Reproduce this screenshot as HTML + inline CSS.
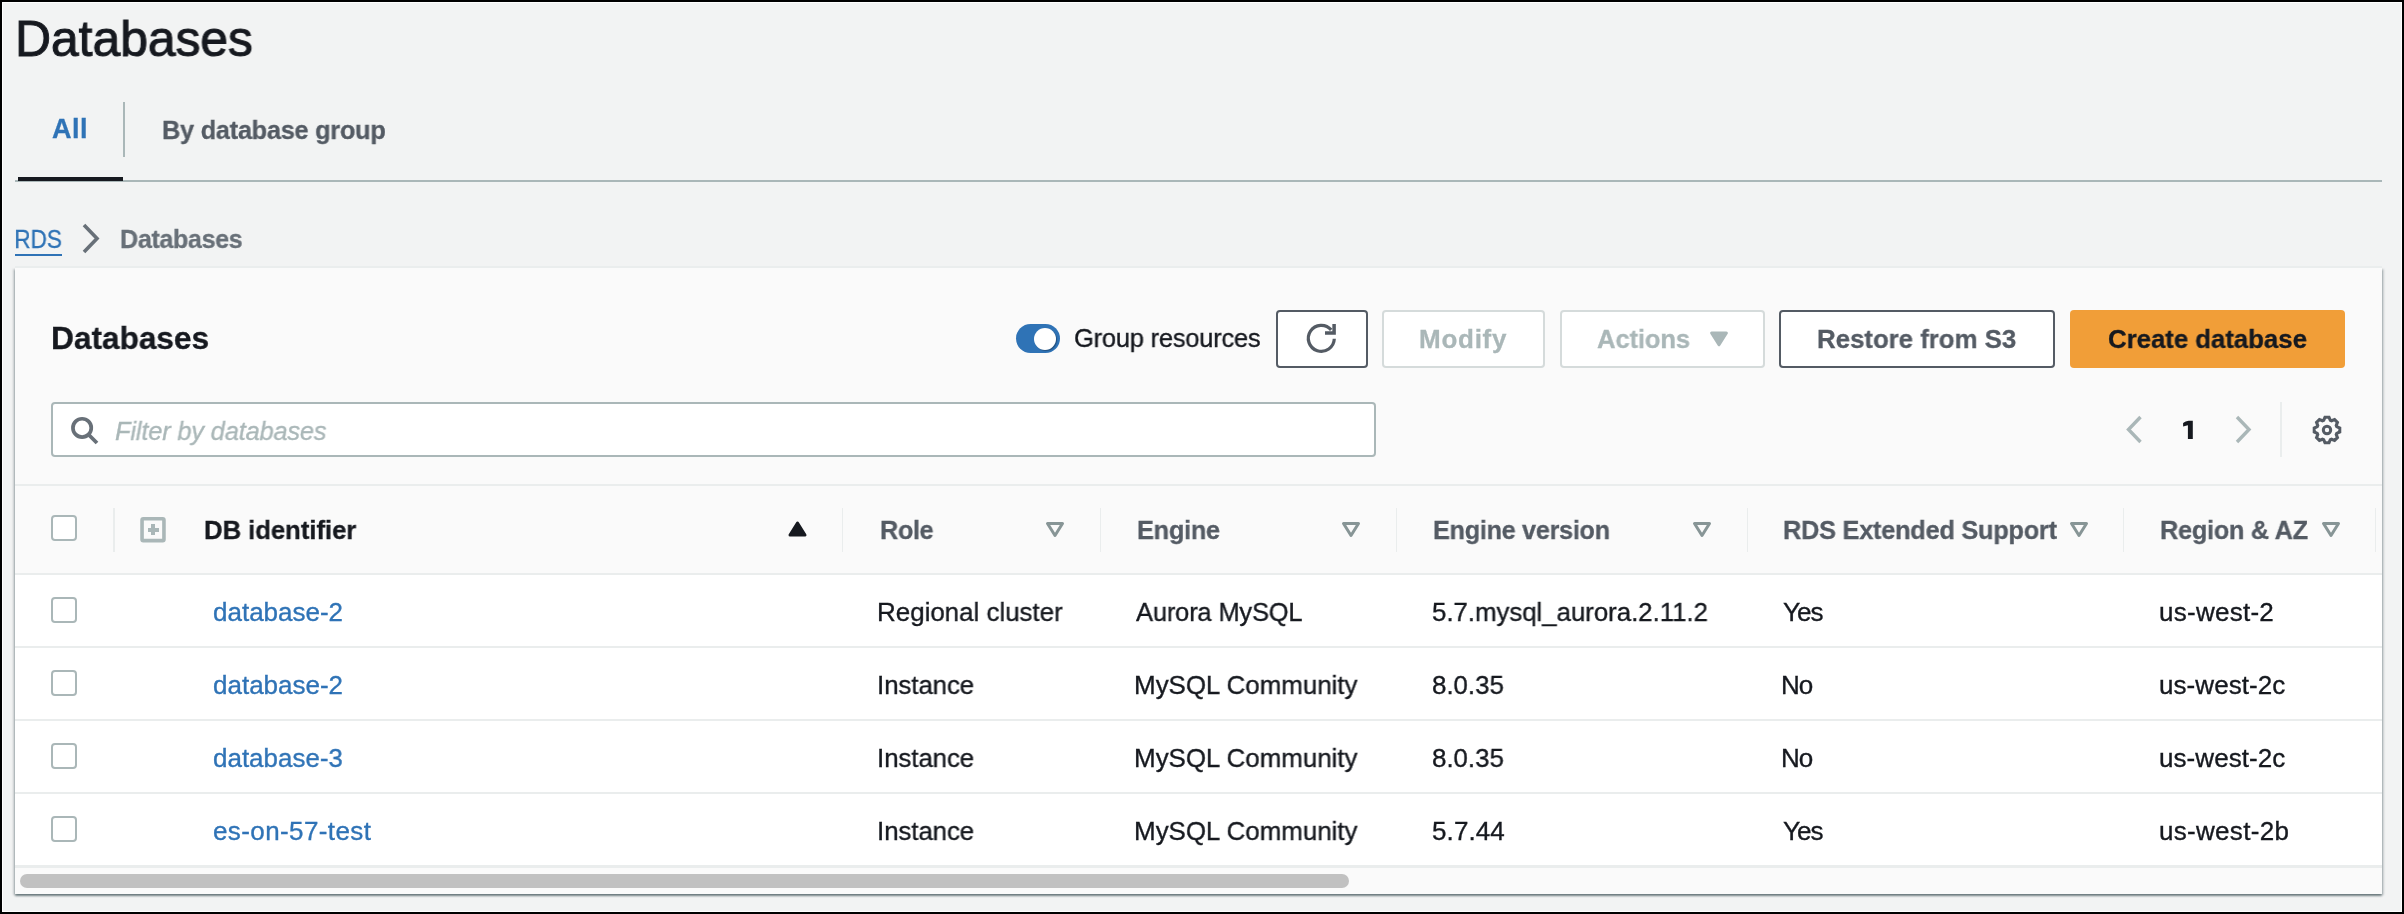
<!DOCTYPE html>
<html><head><meta charset="utf-8"><style>
html,body{margin:0;padding:0}
body{width:2404px;height:914px;overflow:hidden;background:#f2f3f3;position:relative;font-family:"Liberation Sans",sans-serif}
.t{position:absolute;white-space:nowrap;will-change:transform}
.b{position:absolute;box-sizing:border-box}
.frame{position:absolute;left:0;top:0;width:2404px;height:914px;box-sizing:border-box;border:2px solid #000;box-shadow:inset 0 0 0 1px #fff;pointer-events:none}
</style></head><body>
<div class="t" style="left:14.60px;top:14.38px;font-size:50px;line-height:50px;font-weight:normal;font-style:normal;color:#16191f;letter-spacing:-0.057px;-webkit-text-stroke:1.0px #16191f;transform:scaleX(0.9971);transform-origin:4.10px 0">Databases</div>
<div class="t" style="left:52.33px;top:116.14px;font-size:27px;line-height:27px;font-weight:bold;font-style:normal;color:#2f73b6;letter-spacing:0.541px;-webkit-text-stroke:0.3px #2f73b6">All</div>
<div class="t" style="left:162.16px;top:117.19px;font-size:26px;line-height:26px;font-weight:bold;font-style:normal;color:#545b64;letter-spacing:-0.263px;-webkit-text-stroke:0.3px #545b64;transform:scaleX(0.9734);transform-origin:1.74px 0">By database group</div>
<div class="b" style="left:123px;top:102px;width:2px;height:55px;background:#aab7b8"></div>
<div class="b" style="left:15px;top:180px;width:2367px;height:2px;background:#aab7b8"></div>
<div class="b" style="left:18px;top:177px;width:105px;height:4px;background:#16191f"></div>
<div class="t" style="left:14.07px;top:225.99px;font-size:26px;line-height:26px;font-weight:normal;font-style:normal;color:#2f73b6;letter-spacing:0.000px;-webkit-text-stroke:0.35px #2f73b6;transform:scaleX(0.8687);transform-origin:2.13px 0">RDS</div>
<div class="b" style="left:15px;top:254px;width:47px;height:2px;background:#2f73b6"></div>
<svg class="b" style="left:80px;top:222px" width="24" height="34" viewBox="0 0 24 34"><path d="M4 3 L17 16.5 L4 30" fill="none" stroke="#687078" stroke-width="3.6"/></svg>
<div class="t" style="left:120.26px;top:225.99px;font-size:26px;line-height:26px;font-weight:bold;font-style:normal;color:#687078;letter-spacing:-0.376px;-webkit-text-stroke:0.3px #687078;transform:scaleX(0.9657);transform-origin:1.74px 0">Databases</div>
<div class="b" style="left:15px;top:268px;width:2367px;height:626px;background:#fafafa;box-shadow:0 2px 2px 0 rgba(0,28,36,.45),2px 1px 2px 0 rgba(0,28,36,.15),-2px 1px 2px 0 rgba(0,28,36,.15)"></div>
<div class="b" style="left:15px;top:266px;width:2367px;height:2px;background:#eaeded"></div>
<div class="t" style="left:51.16px;top:321.61px;font-size:32px;line-height:32px;font-weight:bold;font-style:normal;color:#16191f;letter-spacing:-0.098px;-webkit-text-stroke:0.3px #16191f;transform:scaleX(0.9926);transform-origin:2.14px 0">Databases</div>
<div class="b" style="left:1016px;top:324px;width:44px;height:29px;background:#2f73b6;border-radius:15px"></div>
<div class="b" style="left:1034px;top:327.7px;width:22px;height:22px;border-radius:50%;background:#fff;box-shadow:1px 1px 1px rgba(0,0,0,.3)"></div>
<div class="t" style="left:1074.29px;top:325.39px;font-size:26px;line-height:26px;font-weight:normal;font-style:normal;color:#16191f;letter-spacing:-0.204px;-webkit-text-stroke:0.35px #16191f;transform:scaleX(0.9781);transform-origin:1.31px 0">Group resources</div>
<div class="b" style="left:1276px;top:310px;width:91.5px;height:57.5px;background:#fff;border:2px solid #545b64;border-radius:4px;box-sizing:border-box"></div>
<svg class="b" style="left:1300px;top:318px" width="44" height="42" viewBox="0 0 44 42"><path d="M34.3 20.8 A13 13 0 1 1 31.2 11.9" fill="none" stroke="#545b64" stroke-width="3.2"/><path d="M25 15.05 H34.1 V6" fill="none" stroke="#545b64" stroke-width="3.5" stroke-linejoin="miter"/></svg>
<div class="b" style="left:1382px;top:310px;width:163px;height:57.5px;background:#fff;border:2px solid #d5dbdb;border-radius:4px;box-sizing:border-box"></div>
<div class="t" style="left:1418.96px;top:325.99px;font-size:26px;line-height:26px;font-weight:bold;font-style:normal;color:#aab7b8;letter-spacing:0.743px;-webkit-text-stroke:0.3px #aab7b8">Modify</div>
<div class="b" style="left:1560px;top:310px;width:205px;height:57.5px;background:#fff;border:2px solid #d5dbdb;border-radius:4px;box-sizing:border-box"></div>
<div class="t" style="left:1597.35px;top:325.99px;font-size:26px;line-height:26px;font-weight:bold;font-style:normal;color:#aab7b8;letter-spacing:-0.151px;-webkit-text-stroke:0.3px #aab7b8;transform:scaleX(0.9857);transform-origin:0.65px 0">Actions</div>
<svg class="b" style="left:1708px;top:330px" width="22" height="18" viewBox="0 0 22 18"><path d="M3.6 2.9 L18.4 2.9 L11 14.8 Z" fill="#aab7b8" stroke="#aab7b8" stroke-width="3" stroke-linejoin="round"/></svg>
<div class="b" style="left:1779px;top:310px;width:276px;height:57.5px;background:#fff;border:2px solid #545b64;border-radius:4px;box-sizing:border-box"></div>
<div class="t" style="left:1817.06px;top:325.99px;font-size:26px;line-height:26px;font-weight:bold;font-style:normal;color:#545b64;letter-spacing:-0.048px;-webkit-text-stroke:0.3px #545b64;transform:scaleX(0.9950);transform-origin:1.74px 0">Restore from S3</div>
<div class="b" style="left:2070px;top:310px;width:275px;height:57.5px;background:#f19e38;border-radius:4px"></div>
<div class="t" style="left:2107.83px;top:325.99px;font-size:26px;line-height:26px;font-weight:bold;font-style:normal;color:#16191f;letter-spacing:-0.055px;-webkit-text-stroke:0.3px #16191f;transform:scaleX(0.9942);transform-origin:1.07px 0">Create database</div>
<div class="b" style="left:51px;top:402px;width:1325px;height:55px;background:#fff;border:2px solid #aab7b8;border-radius:4px;box-sizing:border-box"></div>
<svg class="b" style="left:66px;top:412px" width="36" height="36" viewBox="0 0 36 36"><circle cx="16.1" cy="15.9" r="9.15" fill="none" stroke="#687078" stroke-width="3.7"/><path d="M22.5 22.5 L31 31" stroke="#687078" stroke-width="3.8"/></svg>
<div class="t" style="left:115.10px;top:417.99px;font-size:26px;line-height:26px;font-weight:normal;font-style:italic;color:#aab7b8;letter-spacing:-0.183px;-webkit-text-stroke:0.35px #aab7b8;transform:scaleX(0.9779);transform-origin:0.80px 0">Filter by databases</div>
<svg class="b" style="left:2122px;top:412px" width="26" height="36" viewBox="0 0 26 36"><path d="M18.5 5 L6.5 17.5 L18.5 30" fill="none" stroke="#aab7b8" stroke-width="3.4"/></svg>
<svg class="b" style="left:2180px;top:418px" width="16" height="24" viewBox="0 0 16 24"><path d="M12.8 2.7 V20.9 H7.9 V7.2 L3.1 8.5 V5.0 Q5.5 3.3 8.6 2.7 Z" fill="#16191f"/></svg>
<svg class="b" style="left:2230px;top:412px" width="26" height="36" viewBox="0 0 26 36"><path d="M7 5 L19 17.5 L7 30" fill="none" stroke="#aab7b8" stroke-width="3.4"/></svg>
<div class="b" style="left:2280px;top:402px;width:2px;height:55px;background:#eaeded"></div>
<svg class="b" style="left:2307.3px;top:409.6px" width="40" height="40" viewBox="0 0 40 40"><path d="M16.65 10.26 L17.98 7.26 L22.02 7.26 L23.35 10.26 L24.52 10.74 L27.58 9.56 L30.44 12.42 L29.26 15.48 L29.74 16.65 L32.74 17.98 L32.74 22.02 L29.74 23.35 L29.26 24.52 L30.44 27.58 L27.58 30.44 L24.52 29.26 L23.35 29.74 L22.02 32.74 L17.98 32.74 L16.65 29.74 L15.48 29.26 L12.42 30.44 L9.56 27.58 L10.74 24.52 L10.26 23.35 L7.26 22.02 L7.26 17.98 L10.26 16.65 L10.74 15.48 L9.56 12.42 L12.42 9.56 L15.48 10.74 Z" fill="none" stroke="#545b64" stroke-width="3.1" stroke-linejoin="miter" stroke-miterlimit="10"/><circle cx="20" cy="20" r="3.7" fill="none" stroke="#545b64" stroke-width="3.0"/></svg>
<div class="b" style="left:15px;top:484px;width:2367px;height:2px;background:#eaeded"></div>
<div class="b" style="left:15px;top:486px;width:2367px;height:88px;background:#fafafa"></div>
<div class="b" style="left:15px;top:573px;width:2367px;height:2px;background:#eaeded"></div>
<div class="b" style="left:15px;top:575px;width:2367px;height:72px;background:#fff"></div>
<div class="b" style="left:15px;top:646px;width:2367px;height:2px;background:#eaeded"></div>
<div class="b" style="left:15px;top:648px;width:2367px;height:72px;background:#fff"></div>
<div class="b" style="left:15px;top:719px;width:2367px;height:2px;background:#eaeded"></div>
<div class="b" style="left:15px;top:721px;width:2367px;height:72px;background:#fff"></div>
<div class="b" style="left:15px;top:792px;width:2367px;height:2px;background:#eaeded"></div>
<div class="b" style="left:15px;top:794px;width:2367px;height:72px;background:#fff"></div>
<div class="b" style="left:15px;top:865px;width:2367px;height:2px;background:#eaeded"></div>
<div class="b" style="left:51.1px;top:515.2px;width:25.6px;height:25.399999999999977px;background:#fff;border:2px solid #aab7b8;border-radius:4px;box-sizing:border-box"></div>
<div class="b" style="left:113px;top:508px;width:2px;height:44px;background:#eaeded"></div>
<svg class="b" style="left:138px;top:515px" width="30" height="30" viewBox="0 0 30 30"><rect x="4.05" y="3.75" width="21.9" height="21.9" rx="1.2" fill="none" stroke="#aab7b8" stroke-width="3.6"/></svg>
<div class="b" style="left:147.9px;top:528.2px;width:10.900000000000006px;height:3.699999999999932px;background:#aab7b8"></div>
<div class="b" style="left:151.1px;top:524.1px;width:3.9000000000000057px;height:11.100000000000023px;background:#aab7b8"></div>
<div class="t" style="left:203.66px;top:516.59px;font-size:26px;line-height:26px;font-weight:bold;font-style:normal;color:#16191f;letter-spacing:-0.078px;-webkit-text-stroke:0.3px #16191f;transform:scaleX(0.9908);transform-origin:1.74px 0">DB identifier</div>
<svg class="b" style="left:786px;top:519.3px" width="24" height="20" viewBox="0 0 24 20"><path d="M4 16 L11.5 4 L19 16 Z" fill="#16191f" stroke="#16191f" stroke-width="3" stroke-linejoin="round"/></svg>
<div class="b" style="left:841.5px;top:508px;width:1.5px;height:44px;background:#eaeded"></div>
<div class="b" style="left:1099.5px;top:508px;width:1.5px;height:44px;background:#eaeded"></div>
<div class="b" style="left:1395.5px;top:508px;width:1.5px;height:44px;background:#eaeded"></div>
<div class="b" style="left:1746.5px;top:508px;width:1.5px;height:44px;background:#eaeded"></div>
<div class="b" style="left:2122.5px;top:508px;width:1.5px;height:44px;background:#eaeded"></div>
<div class="b" style="left:2374.5px;top:508px;width:1.5px;height:44px;background:#eaeded"></div>
<div class="t" style="left:879.56px;top:517.19px;font-size:26px;line-height:26px;font-weight:bold;font-style:normal;color:#545b64;letter-spacing:-0.387px;-webkit-text-stroke:0.3px #545b64;transform:scaleX(0.9686);transform-origin:1.74px 0">Role</div>
<svg class="b" style="left:1044px;top:519.7px" width="23" height="19" viewBox="0 0 23 19"><path d="M3.5 3.5 L18.5 3.5 L11 15.5 Z" fill="none" stroke="#879596" stroke-width="3" stroke-linejoin="round"/></svg>
<div class="t" style="left:1136.96px;top:517.19px;font-size:26px;line-height:26px;font-weight:bold;font-style:normal;color:#545b64;letter-spacing:-0.299px;-webkit-text-stroke:0.3px #545b64;transform:scaleX(0.9740);transform-origin:1.74px 0">Engine</div>
<svg class="b" style="left:1340px;top:519.7px" width="23" height="19" viewBox="0 0 23 19"><path d="M3.5 3.5 L18.5 3.5 L11 15.5 Z" fill="none" stroke="#879596" stroke-width="3" stroke-linejoin="round"/></svg>
<div class="t" style="left:1433.16px;top:517.19px;font-size:26px;line-height:26px;font-weight:bold;font-style:normal;color:#545b64;letter-spacing:-0.296px;-webkit-text-stroke:0.3px #545b64;transform:scaleX(0.9694);transform-origin:1.74px 0">Engine version</div>
<svg class="b" style="left:1691.3px;top:519.7px" width="23" height="19" viewBox="0 0 23 19"><path d="M3.5 3.5 L18.5 3.5 L11 15.5 Z" fill="none" stroke="#879596" stroke-width="3" stroke-linejoin="round"/></svg>
<div class="t" style="left:1783.16px;top:517.19px;font-size:26px;line-height:26px;font-weight:bold;font-style:normal;color:#545b64;letter-spacing:-0.260px;-webkit-text-stroke:0.3px #545b64;transform:scaleX(0.9745);transform-origin:1.74px 0">RDS Extended Support</div>
<svg class="b" style="left:2068px;top:519.7px" width="23" height="19" viewBox="0 0 23 19"><path d="M3.5 3.5 L18.5 3.5 L11 15.5 Z" fill="none" stroke="#879596" stroke-width="3" stroke-linejoin="round"/></svg>
<div class="t" style="left:2160.06px;top:517.19px;font-size:26px;line-height:26px;font-weight:bold;font-style:normal;color:#545b64;letter-spacing:-0.284px;-webkit-text-stroke:0.3px #545b64;transform:scaleX(0.9730);transform-origin:1.74px 0">Region &amp; AZ</div>
<svg class="b" style="left:2320px;top:519.7px" width="23" height="19" viewBox="0 0 23 19"><path d="M3.5 3.5 L18.5 3.5 L11 15.5 Z" fill="none" stroke="#879596" stroke-width="3" stroke-linejoin="round"/></svg>
<div class="b" style="left:51.1px;top:597.3px;width:25.6px;height:25.399999999999977px;background:#fff;border:2px solid #aab7b8;border-radius:4px;box-sizing:border-box"></div>
<div class="t" style="left:213.31px;top:598.59px;font-size:26px;line-height:26px;font-weight:normal;font-style:normal;color:#2f73b6;letter-spacing:-0.005px;-webkit-text-stroke:0.35px #2f73b6;transform:scaleX(0.9995);transform-origin:1.09px 0">database-2</div>
<div class="t" style="left:877.37px;top:598.59px;font-size:26px;line-height:26px;font-weight:normal;font-style:normal;color:#16191f;letter-spacing:-0.020px;-webkit-text-stroke:0.35px #16191f;transform:scaleX(0.9975);transform-origin:2.13px 0">Regional cluster</div>
<div class="t" style="left:1136.25px;top:598.59px;font-size:26px;line-height:26px;font-weight:normal;font-style:normal;color:#16191f;letter-spacing:-0.198px;-webkit-text-stroke:0.35px #16191f;transform:scaleX(0.9813);transform-origin:0.05px 0">Aurora MySQL</div>
<div class="t" style="left:1431.86px;top:598.59px;font-size:26px;line-height:26px;font-weight:normal;font-style:normal;color:#16191f;letter-spacing:-0.046px;-webkit-text-stroke:0.35px #16191f;transform:scaleX(0.9945);transform-origin:1.04px 0">5.7.mysql_aurora.2.11.2</div>
<div class="t" style="left:1782.93px;top:598.59px;font-size:26px;line-height:26px;font-weight:normal;font-style:normal;color:#16191f;letter-spacing:-1.000px;-webkit-text-stroke:0.35px #16191f">Yes</div>
<div class="t" style="left:2158.81px;top:598.59px;font-size:26px;line-height:26px;font-weight:normal;font-style:normal;color:#16191f;letter-spacing:0.262px;-webkit-text-stroke:0.35px #16191f">us-west-2</div>
<div class="b" style="left:51.1px;top:670.3px;width:25.6px;height:25.399999999999977px;background:#fff;border:2px solid #aab7b8;border-radius:4px;box-sizing:border-box"></div>
<div class="t" style="left:213.31px;top:671.59px;font-size:26px;line-height:26px;font-weight:normal;font-style:normal;color:#2f73b6;letter-spacing:-0.005px;-webkit-text-stroke:0.35px #2f73b6;transform:scaleX(0.9995);transform-origin:1.09px 0">database-2</div>
<div class="t" style="left:877.10px;top:671.59px;font-size:26px;line-height:26px;font-weight:normal;font-style:normal;color:#16191f;letter-spacing:-0.065px;-webkit-text-stroke:0.35px #16191f;transform:scaleX(0.9928);transform-origin:2.40px 0">Instance</div>
<div class="t" style="left:1134.17px;top:671.59px;font-size:26px;line-height:26px;font-weight:normal;font-style:normal;color:#16191f;letter-spacing:-0.026px;-webkit-text-stroke:0.35px #16191f;transform:scaleX(0.9976);transform-origin:2.13px 0">MySQL Community</div>
<div class="t" style="left:1431.77px;top:671.59px;font-size:26px;line-height:26px;font-weight:normal;font-style:normal;color:#16191f;letter-spacing:-0.037px;-webkit-text-stroke:0.35px #16191f;transform:scaleX(0.9960);transform-origin:1.13px 0">8.0.35</div>
<div class="t" style="left:1781.37px;top:671.59px;font-size:26px;line-height:26px;font-weight:normal;font-style:normal;color:#16191f;letter-spacing:-1.000px;-webkit-text-stroke:0.35px #16191f">No</div>
<div class="t" style="left:2158.81px;top:671.59px;font-size:26px;line-height:26px;font-weight:normal;font-style:normal;color:#16191f;letter-spacing:0.075px;-webkit-text-stroke:0.35px #16191f">us-west-2c</div>
<div class="b" style="left:51.1px;top:743.3px;width:25.6px;height:25.399999999999977px;background:#fff;border:2px solid #aab7b8;border-radius:4px;box-sizing:border-box"></div>
<div class="t" style="left:213.31px;top:744.59px;font-size:26px;line-height:26px;font-weight:normal;font-style:normal;color:#2f73b6;letter-spacing:-0.012px;-webkit-text-stroke:0.35px #2f73b6;transform:scaleX(0.9987);transform-origin:1.09px 0">database-3</div>
<div class="t" style="left:877.10px;top:744.59px;font-size:26px;line-height:26px;font-weight:normal;font-style:normal;color:#16191f;letter-spacing:-0.065px;-webkit-text-stroke:0.35px #16191f;transform:scaleX(0.9928);transform-origin:2.40px 0">Instance</div>
<div class="t" style="left:1134.17px;top:744.59px;font-size:26px;line-height:26px;font-weight:normal;font-style:normal;color:#16191f;letter-spacing:-0.026px;-webkit-text-stroke:0.35px #16191f;transform:scaleX(0.9976);transform-origin:2.13px 0">MySQL Community</div>
<div class="t" style="left:1431.77px;top:744.59px;font-size:26px;line-height:26px;font-weight:normal;font-style:normal;color:#16191f;letter-spacing:-0.037px;-webkit-text-stroke:0.35px #16191f;transform:scaleX(0.9960);transform-origin:1.13px 0">8.0.35</div>
<div class="t" style="left:1781.37px;top:744.59px;font-size:26px;line-height:26px;font-weight:normal;font-style:normal;color:#16191f;letter-spacing:-1.000px;-webkit-text-stroke:0.35px #16191f">No</div>
<div class="t" style="left:2158.81px;top:744.59px;font-size:26px;line-height:26px;font-weight:normal;font-style:normal;color:#16191f;letter-spacing:0.075px;-webkit-text-stroke:0.35px #16191f">us-west-2c</div>
<div class="b" style="left:51.1px;top:816.3px;width:25.6px;height:25.399999999999977px;background:#fff;border:2px solid #aab7b8;border-radius:4px;box-sizing:border-box"></div>
<div class="t" style="left:213.30px;top:817.59px;font-size:26px;line-height:26px;font-weight:normal;font-style:normal;color:#2f73b6;letter-spacing:0.393px;-webkit-text-stroke:0.35px #2f73b6">es-on-57-test</div>
<div class="t" style="left:877.10px;top:817.59px;font-size:26px;line-height:26px;font-weight:normal;font-style:normal;color:#16191f;letter-spacing:-0.065px;-webkit-text-stroke:0.35px #16191f;transform:scaleX(0.9928);transform-origin:2.40px 0">Instance</div>
<div class="t" style="left:1134.17px;top:817.59px;font-size:26px;line-height:26px;font-weight:normal;font-style:normal;color:#16191f;letter-spacing:-0.026px;-webkit-text-stroke:0.35px #16191f;transform:scaleX(0.9976);transform-origin:2.13px 0">MySQL Community</div>
<div class="t" style="left:1431.86px;top:817.59px;font-size:26px;line-height:26px;font-weight:normal;font-style:normal;color:#16191f;letter-spacing:0.103px;-webkit-text-stroke:0.35px #16191f">5.7.44</div>
<div class="t" style="left:1782.93px;top:817.59px;font-size:26px;line-height:26px;font-weight:normal;font-style:normal;color:#16191f;letter-spacing:-1.000px;-webkit-text-stroke:0.35px #16191f">Yes</div>
<div class="t" style="left:2158.81px;top:817.59px;font-size:26px;line-height:26px;font-weight:normal;font-style:normal;color:#16191f;letter-spacing:0.303px;-webkit-text-stroke:0.35px #16191f">us-west-2b</div>
<div class="b" style="left:15px;top:868px;width:2367px;height:26px;background:#fafafa"></div>
<div class="b" style="left:15px;top:865px;width:2367px;height:3px;background:#eaeded"></div>
<div class="b" style="left:20px;top:874px;width:1329px;height:14px;background:#c1c1c1;border-radius:7px"></div>
<div class="frame"></div>
</body></html>
